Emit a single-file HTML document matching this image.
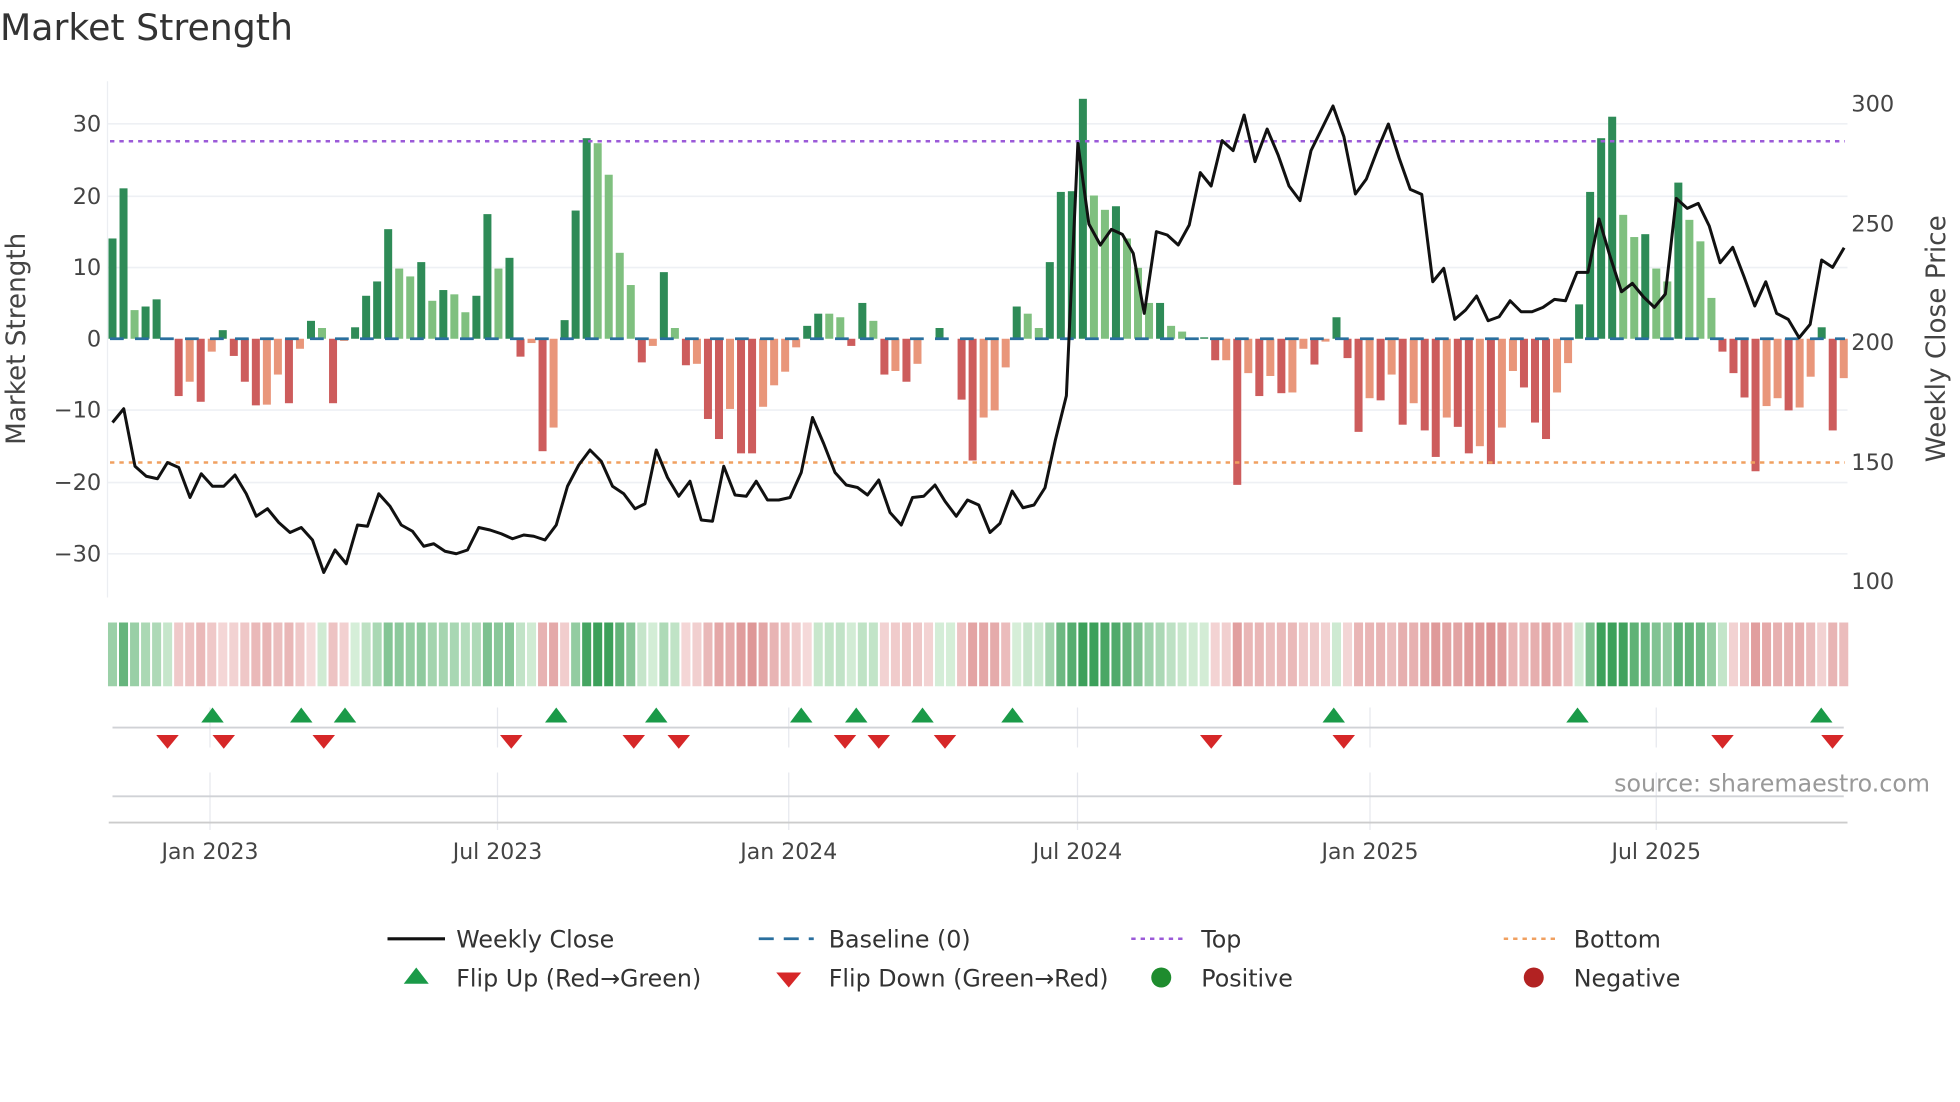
<!DOCTYPE html>
<html><head><meta charset="utf-8"><style>
html,body{margin:0;padding:0;background:#fff;overflow:hidden}
svg{display:block}
text{font-family:"DejaVu Sans","Liberation Sans",sans-serif}
</style></head><body>
<svg id="s" width="1960" height="1102" viewBox="0 0 1568 881.6" xmlns="http://www.w3.org/2000/svg">
<text x="0" y="32" font-size="29" fill="#333">Market Strength</text>
<g id="grid"></g>
<line x1="86" y1="65" x2="86" y2="478" stroke="#eceef2" stroke-width="1"/>
<g id="bars"></g>
<line x1="88" y1="271" x2="1476" y2="271" stroke="#2a6f9e" stroke-width="2.2" stroke-dasharray="11,9"/>
<line x1="88" y1="113" x2="1476" y2="113" stroke="#9b5ad8" stroke-width="2" stroke-dasharray="3.5,4"/>
<line x1="88" y1="370" x2="1476" y2="370" stroke="#f0a060" stroke-width="2" stroke-dasharray="3.5,4"/>
<polyline id="price" fill="none" stroke="#111" stroke-width="2.4" stroke-linejoin="round"/>
<g id="heat"></g>
<g id="lower"></g>
<g font-size="18" fill="#444" text-anchor="end">
<text x="81" y="105">30</text><text x="81" y="163">20</text><text x="81" y="220">10</text><text x="81" y="277">0</text>
<text x="81" y="334">−10</text><text x="81" y="392">−20</text><text x="81" y="449">−30</text>
</g>
<g font-size="18" fill="#444">
<text x="1481" y="89">300</text><text x="1481" y="185">250</text><text x="1481" y="280">200</text><text x="1481" y="376">150</text><text x="1481" y="471">100</text>
</g>
<text transform="translate(20,271) rotate(-90)" font-size="21" fill="#444" text-anchor="middle">Market Strength</text>
<text transform="translate(1556,271) rotate(-90)" font-size="21" fill="#444" text-anchor="middle">Weekly Close Price</text>
<text x="1544" y="633" font-size="19" fill="#999" text-anchor="end">source: sharemaestro.com</text>
<g font-size="17.6" fill="#444" text-anchor="middle">
<text x="168" y="687">Jan 2023</text><text x="398" y="687">Jul 2023</text><text x="631" y="687">Jan 2024</text>
<text x="862" y="687">Jul 2024</text><text x="1096" y="687">Jan 2025</text><text x="1325" y="687">Jul 2025</text>
</g>
<g font-size="19" fill="#333">
<line x1="310" y1="751" x2="356" y2="751" stroke="#111" stroke-width="2.5"/><text x="365" y="758">Weekly Close</text>
<line x1="607" y1="751" x2="651" y2="751" stroke="#2a6f9e" stroke-width="2.2" stroke-dasharray="12,8"/><text x="663" y="758">Baseline (0)</text>
<line x1="905" y1="751" x2="949" y2="751" stroke="#9b5ad8" stroke-width="2" stroke-dasharray="3.5,4"/><text x="961" y="758">Top</text>
<line x1="1203" y1="751" x2="1247" y2="751" stroke="#f0a060" stroke-width="2" stroke-dasharray="3.5,4"/><text x="1259" y="758">Bottom</text>
<polygon points="333,774 343,787 323,787" fill="#1a9a48"/><text x="365" y="789">Flip Up (Red→Green)</text>
<polygon points="631,790 641,778 621,778" fill="#d62728"/><text x="663" y="789">Flip Down (Green→Red)</text>
<circle cx="929" cy="782" r="8" fill="#1e8c2e"/><text x="961" y="789">Positive</text>
<circle cx="1227" cy="782" r="8" fill="#b22222"/><text x="1259" y="789">Negative</text>
</g>
</svg>
<script>
var NS="http://www.w3.org/2000/svg";
function el(p,t,a){var e=document.createElementNS(NS,t);for(var k in a)e.setAttribute(k,a[k]);p.appendChild(e);return e;}
var g=document.getElementById("grid");
[99,157,214,328,386,443].forEach(function(y){el(g,"line",{x1:86,y1:y,x2:1478,y2:y,stroke:"#eef0f4","stroke-width":1.3});});
var B="14G 21G 4g 4.5G 5.5G 0 -8R -6r -8.8R -1.8r 1.2G -2.4R -6R -9.3R -9.2r -5r -9R -1.4r 2.5G 1.5g -9R -0.3r 1.6G 6G 8G 15.3G 9.8g 8.7g 10.7G 5.3g 6.8G 6.2g 3.7g 6G 17.4G 9.8g 11.3G -2.5R -0.6r -15.7R -12.4r 2.6G 17.9G 28G 27.3g 22.9g 12g 7.5g -3.3R -1r 9.3G 1.5g -3.7R -3.5r -11.2R -14R -9.8r -16R -16R -9.5r -6.5r -4.6r -1.2r 1.8G "+
"3.5G 3.5g 3g -1R 5G 2.5g -5R -4.5r -6R -3.5r 0 1.5G 0 -8.5R -17R -11r -10r "+
"-4r 4.5G 3.5g 1.5g 10.7G 20.5G 20.6G 33.5G 20g 18g 18.5G 14g 9.9g 5g 5G 1.8g 1g 0 0.2G -3R -3r -20.4R -4.8r -8R -5.2r -7.6R -7.5r -1.4r -3.6R -0.4r 3G -2.7R -13R -8.3r -8.6R -5r -12R -9r -12.8R -16.5R -11r -12.3R -16R -15r -17.5R -12.4r -4.5r -6.8R -11.7R -14R -7.5r -3.4r 4.8G 20.5G 28G 31G 17.3g 14.2g 14.6G 9.8g 8g 21.8G 16.6g 13.6g 5.7g -1.8R -4.8R -8.2R -18.5R -9.4r -8.3r -10R -9.6r -5.3r 1.6G -12.8R -5.5r";
var arr=B.split(" ");var n=arr.length;var step=(1475-90)/(n-1);
var col={G:"#2e8b57",g:"#7fc07f",R:"#cd5c5c",r:"#e9967a"};
var bars=document.getElementById("bars"),heat=document.getElementById("heat");
function mix(a,b,t){return "rgb("+[0,1,2].map(function(i){return Math.round(a[i]+(b[i]-a[i])*t)}).join(",")+")";}
var sm=0;
arr.forEach(function(s,i){var v=parseFloat(s),t=s.replace(/[-0-9.]/g,"")||"r";var x=90+i*step;
 var y0=271,h=v*5.73;
 if(Math.abs(v)>0.05) el(bars,"rect",{x:x-3.2,y:v>0?y0-h:y0,width:6.4,height:Math.abs(h),fill:col[t]});
 sm=sm*0.4+v*0.6;var m=Math.min(1,Math.abs(sm)/22);
 var c=sm>=0?mix([214,238,216],[60,160,90],m):mix([245,218,218],[212,120,120],m);
 el(heat,"rect",{x:x-step/2+0.8,y:498,width:step-1.6,height:51,fill:c});
});
var P=[[90,338],[99,327],[108,373],[117,381],[126,383],[134,370],[143,374],[152,398],[161,379],[170,389],[179,389],[188,380],[197,395],[205,413],[214,407],[223,418],[232,426],[241,422],[250,432],[259,458],[268,440],[277,451],[286,420],[294,421],[303,395],[312,405],[321,420],[330,425],[339,437],[347,435],[356,441],[365,443],[374,440],[383,422],[392,424],[401,427],[410,431],[419,428],[427,429],[436,432],[445,420],[454,389],[463,372],[472,360],[481,369],[490,389],[499,395],[508,407],[516,403],[525,360],[534,382],[543,397],[552,385],[561,416],[570,417],[579,373],[588,396],[597,397],[605,385],[614,400],[623,400],[632,398],[641,378],[650,334],[659,355],[668,378],[677,388],[686,390],[694,396],[703,384],[712,410],[721,420],[730,398],[739,397],[748,388],[756,401],[765,413],[774,400],[783,404],[792,426]];
var Z=[[0,1330],[22,1233],[42,1283],[62,1275],[82,1223],[101,1080],[121,947],[142,190],[162,432],[183,495],[203,448],[223,463],[243,520],[263,700],[285,455],[305,465],[325,495],[345,435],[365,278],[385,318],[405,182],[425,212],[445,105],[465,245],[487,147],[507,225],[527,318],[547,362],[567,212],[587,145],[607,78],[627,170],[648,342],[668,297],[688,210],[708,132],[728,235],[748,328],[769,343],[789,605],[809,565],[829,718],[849,690],[869,648],[890,722],[910,710],[930,662],[950,695],[970,695],[990,682],[1011,658],[1031,662],[1052,577],[1072,577],[1092,417],[1112,527],[1133,635],[1153,610],[1173,650],[1193,682],[1213,642],[1233,355],[1253,385],[1273,370],[1293,438],[1313,548],[1336,502],[1356,588],[1376,678],[1396,605],[1416,700],[1437,718],[1457,773],[1477,733],[1498,540],[1518,562],[1539,503]];
Z.forEach(function(p){P.push([800+p[0]*0.4388,64+p[1]*0.2667]);});
document.getElementById("price").setAttribute("points",P.map(function(p){return p[0].toFixed(1)+","+p[1].toFixed(1)}).join(" "));
var L=document.getElementById("lower");
[168,398,631,862,1096,1325].forEach(function(x){el(L,"line",{x1:x,y1:566,x2:x,y2:598,stroke:"#e6e8ee","stroke-width":1});el(L,"line",{x1:x,y1:618,x2:x,y2:664,stroke:"#e6e8ee","stroke-width":1});});
el(L,"line",{x1:90,y1:582,x2:1475,y2:582,stroke:"#d0d2d6","stroke-width":1.5});
el(L,"line",{x1:90,y1:637,x2:1475,y2:637,stroke:"#d0d2d6","stroke-width":1.5});
el(L,"line",{x1:87,y1:658,x2:1478,y2:658,stroke:"#ccc","stroke-width":1.5});
[170,241,276,445,525,641,685,738,810,1067,1262,1457].forEach(function(x){el(L,"polygon",{points:x+",566 "+(x+9)+",578 "+(x-9)+",578",fill:"#1a9a48"});});
[134,179,259,409,507,543,676,703,756,969,1075,1378,1466].forEach(function(x){el(L,"polygon",{points:(x-9)+",588 "+(x+9)+",588 "+x+",599",fill:"#d62728"});});
</script>
</body></html>
